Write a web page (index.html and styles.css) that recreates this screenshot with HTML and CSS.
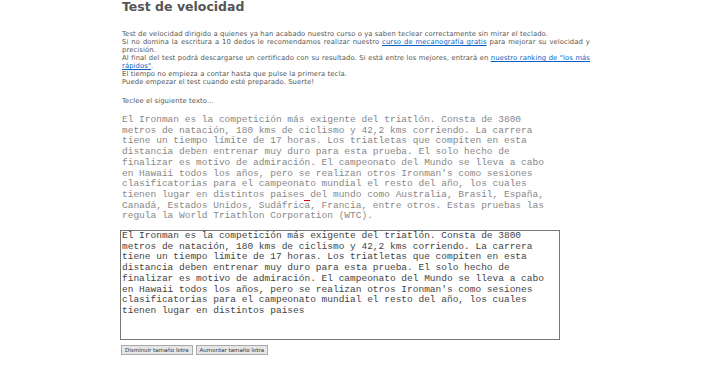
FILE: index.html
```html
<!DOCTYPE html>
<html>
<head>
<meta charset="utf-8">
<title>Test de velocidad</title>
<link rel="stylesheet" href="styles.css">
</head>
<body>
<div id="wrap">
	<h1>Test de velocidad</h1>
	<div id="intro">
		<p>Test de velocidad dirigido a quienes ya han acabado nuestro curso o ya saben teclear correctamente sin mirar el teclado.</p>
		<p>Si no domina la escritura a 10 dedos le recomendamos realizar nuestro <a href="#">curso de mecanografía gratis</a> para mejorar su velocidad y precisión.</p>
		<p>Al final del test podrá descargarse un certificado con su resultado. Si está entre los mejores, entrará en <a href="#">nuestro ranking de "los más rápidos"</a>.</p>
		<p>El tiempo no empieza a contar hasta que pulse la primera tecla.</p>
		<p>Puede empezar el test cuando esté preparado. Suerte!</p>
	</div>
	<p class="hint">Teclee el siguiente texto...</p>
	<div id="sample">El Ironman es la competición más exigente del triatlón. Consta de 3800 metros de natación, 180 kms de ciclismo y 42,2 kms corriendo. La carrera tiene un tiempo límite de 17 horas. Los triatletas que compiten en esta distancia deben entrenar muy duro para esta prueba. El solo hecho de finalizar es motivo de admiración. El campeonato del Mundo se lleva a cabo en Hawaii todos los años, pero se realizan otros Ironman's como sesiones clasificatorias para el campeonato mundial el resto del año, los cuales tienen lugar en distintos paises<span class="cur"> </span>del mundo como Australia, Brasil, España, Canadá, Estados Unidos, Sudáfrica, Francia, entre otros. Estas pruebas las regula la World Triathlon Corporation (WTC).</div>
	<textarea id="typed" spellcheck="false">El Ironman es la competición más exigente del triatlón. Consta de 3800 metros de natación, 180 kms de ciclismo y 42,2 kms corriendo. La carrera tiene un tiempo límite de 17 horas. Los triatletas que compiten en esta distancia deben entrenar muy duro para esta prueba. El solo hecho de finalizar es motivo de admiración. El campeonato del Mundo se lleva a cabo en Hawaii todos los años, pero se realizan otros Ironman's como sesiones clasificatorias para el campeonato mundial el resto del año, los cuales tienen lugar en distintos paises</textarea>
	<div id="controls">
		<button>Disminuir tamaño letra</button>
		<button>Aumentar tamaño letra</button>
	</div>
</div>
</body>
</html>
```

FILE: styles.css
```css
body, div, p, h1 {
	margin: 0;
	padding: 0;
}
body {
	font: 6.8px "DejaVu Sans", Verdana, sans-serif;
	letter-spacing: 0.1px;
	color: #555;
	background: #fff;
}
#wrap {
	width: 468px;
	margin-left: 122px;
}
h1 {
	font-size: 12.5px;
	font-weight: bold;
	letter-spacing: 0;
	color: #555;
	line-height: 14px;
	padding-bottom: 16px;
}
#intro {
	text-align: justify;
	line-height: 8px;
}
#intro a {
	color: #0a5fc4;
}
.hint {
	margin-top: 11px;
	line-height: 8px;
}
#sample, #typed {
	font-family: "Liberation Mono", "Courier New", monospace;
	font-size: 9.5px;
	letter-spacing: 0;
	line-height: 10.7px;
}
#sample {
	width: 436px;
	margin-top: 10px;
	color: #888;
}
#sample .cur {
	border-bottom: 1px solid #d00;
}
#typed {
	display: block;
	box-sizing: border-box;
	width: 440px;
	height: 110px;
	margin: 8px 0 0 -2px;
	padding: 0 1px;
	border: 1px solid #777;
	color: #444;
	resize: none;
	overflow: hidden;
}
#controls {
	display: flex;
	gap: 3px;
	margin-top: 5px;
	margin-left: -1px;
}
#controls button {
	font: 5.5px "DejaVu Sans", Verdana, sans-serif;
	color: #333;
	background: #e6e6e6;
	border: 1px solid #aaa;
	padding: 1px 3px;
	height: 10px;
	line-height: 6px;
}
```
